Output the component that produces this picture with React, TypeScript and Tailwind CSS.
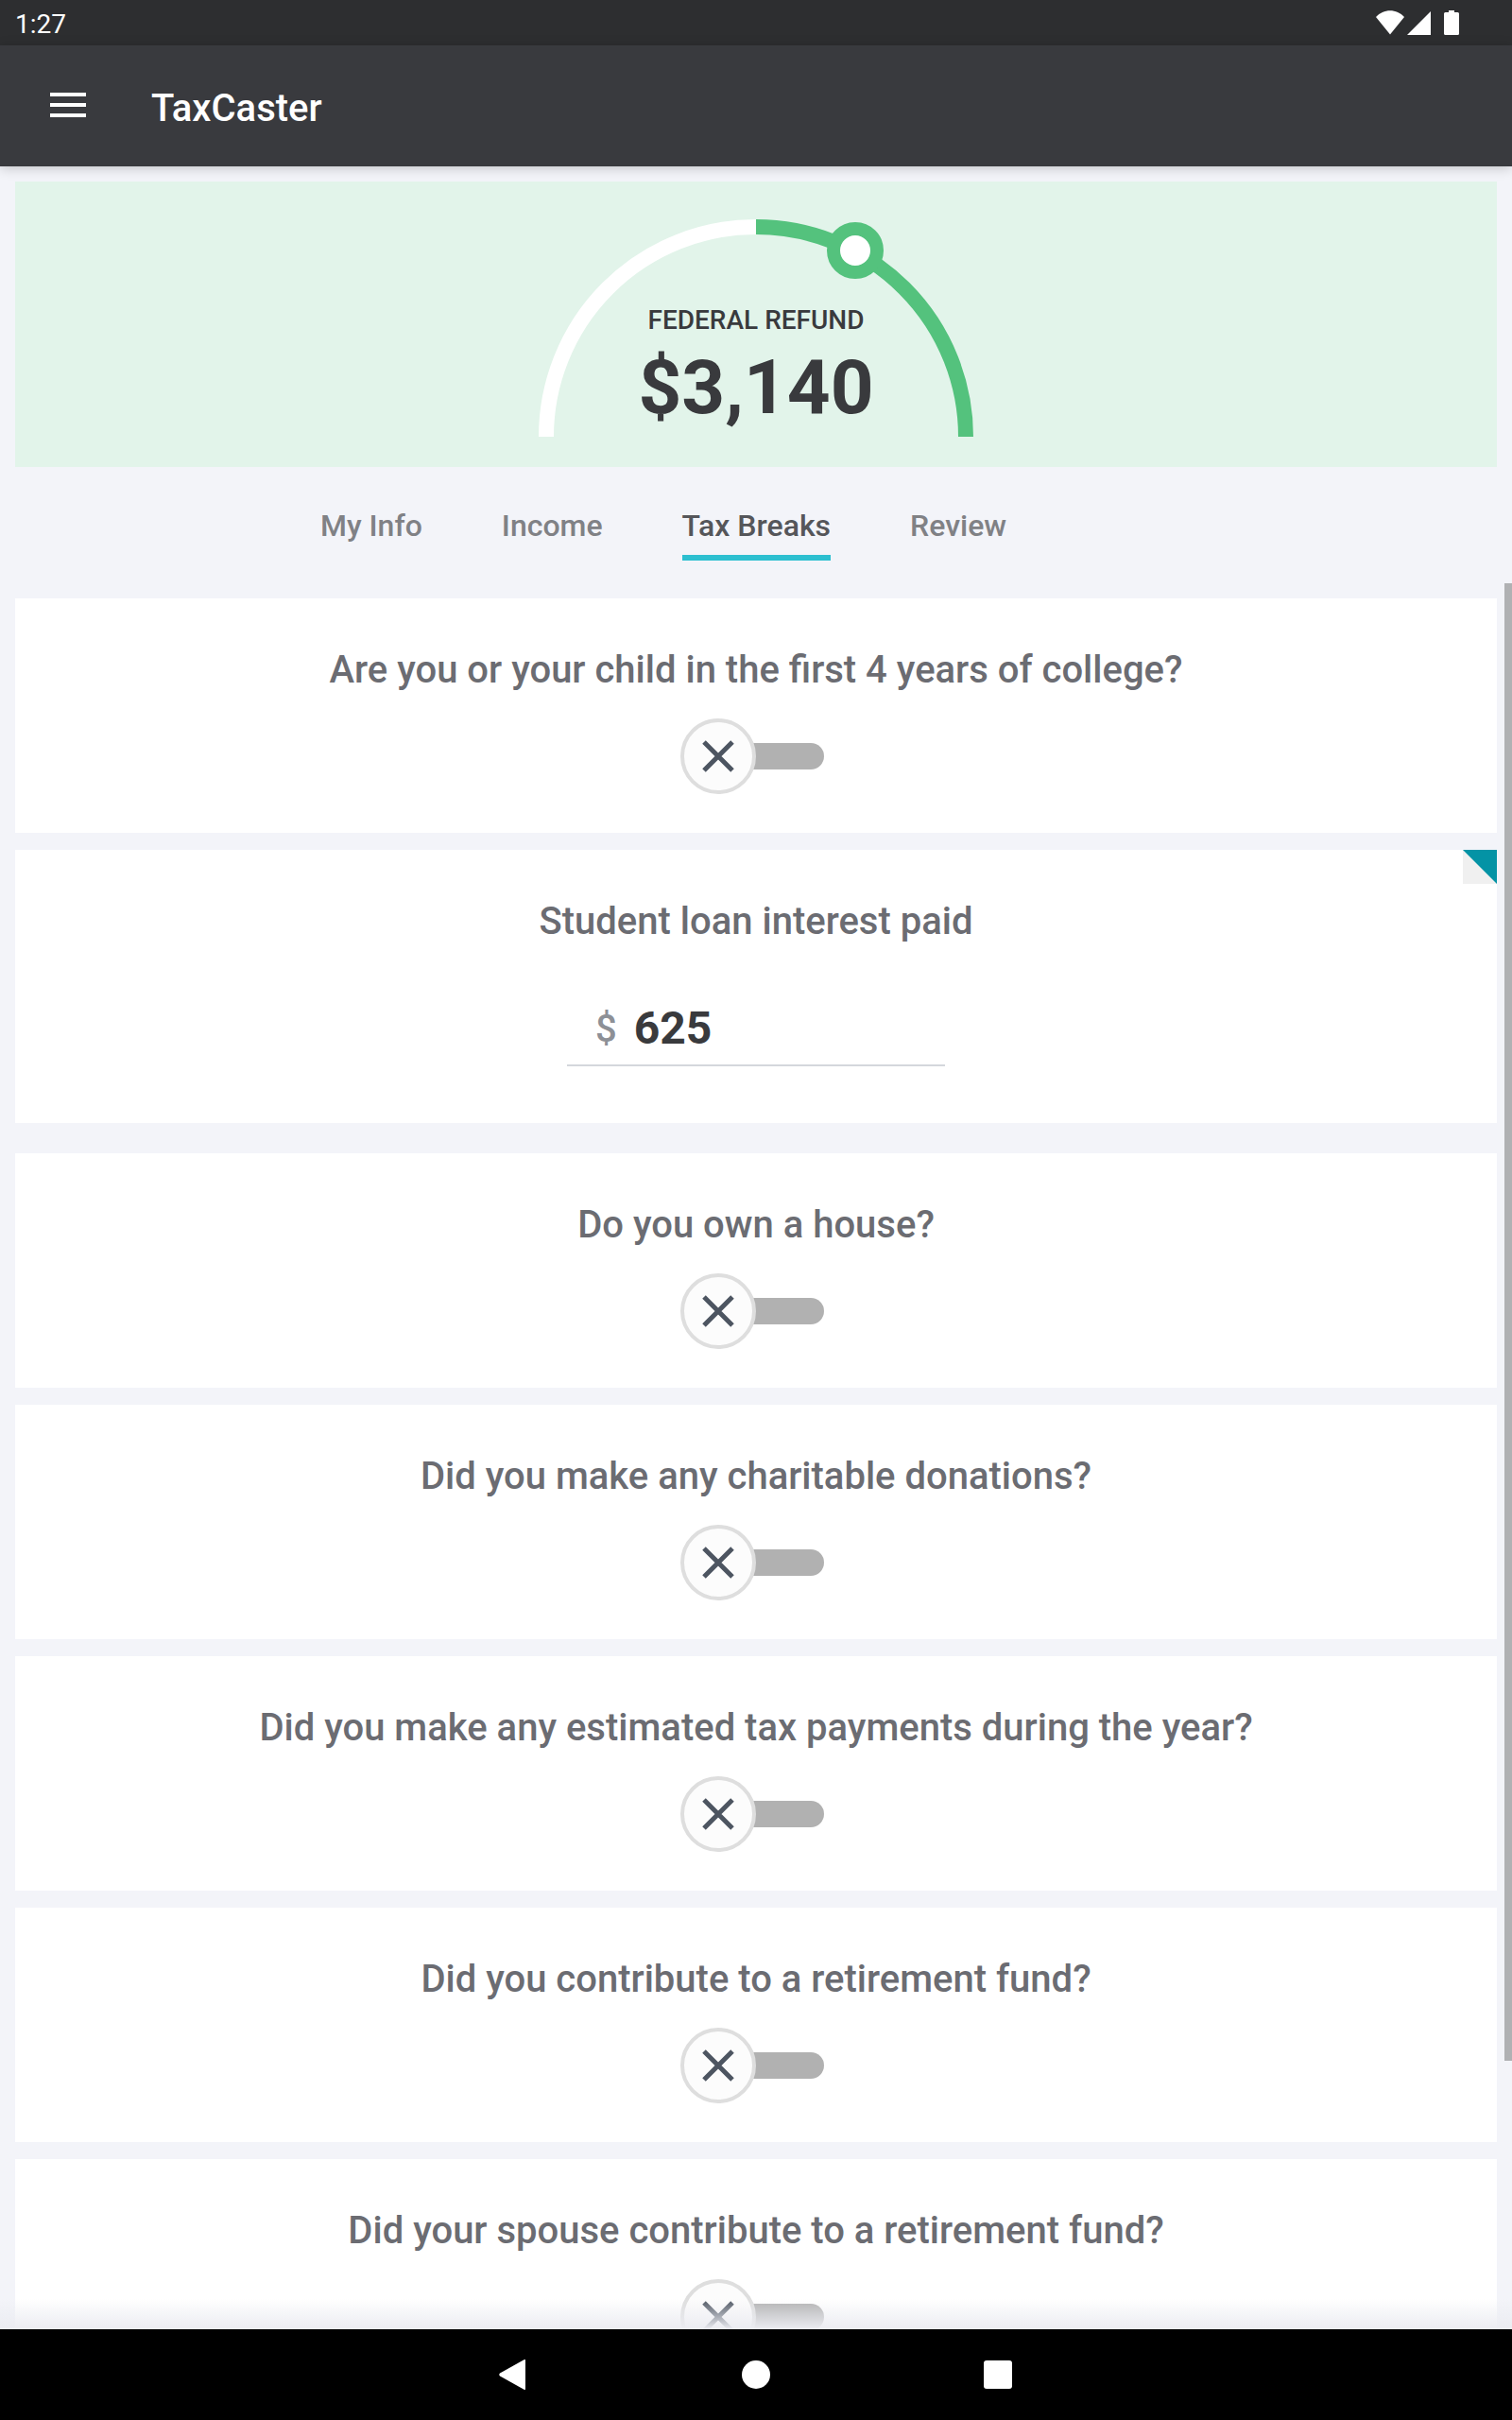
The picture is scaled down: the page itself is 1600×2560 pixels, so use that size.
import React, { useState } from 'react';
import clsx from 'clsx';

interface Question {
  id: string;
  text: string;
}

const tabs = ['My Info', 'Income', 'Tax Breaks', 'Review'];

const collegeQuestion: Question = {
  id: 'college',
  text: 'Are you or your child in the first 4 years of college?',
};

const questions: Question[] = [
  { id: 'house', text: 'Do you own a house?' },
  { id: 'donations', text: 'Did you make any charitable donations?' },
  { id: 'estimated', text: 'Did you make any estimated tax payments during the year?' },
  { id: 'retirement', text: 'Did you contribute to a retirement fund?' },
  { id: 'spouse-retirement', text: 'Did your spouse contribute to a retirement fund?' },
];

const StatusBar: React.FC = () => (
  <div className="flex h-12 shrink-0 items-center justify-between bg-[#2d2e30] pl-4 pr-14 text-white">
    <span className="pt-1 text-[28px] leading-8">1:27</span>
    <svg width="88" height="26" viewBox="0 0 88 26" fill="currentColor" aria-hidden="true">
      <path d="M0 7C8 -2 22 -2 30 7L15 25.500Z" />
      <path d="M58 1V26H33Z" />
      <path d="M77 0h6v2h3.500a1.500 1.500 0 0 1 1.500 1.500v21a1.500 1.500 0 0 1-1.500 1.500h-13a1.500 1.500 0 0 1-1.500-1.500v-21a1.500 1.500 0 0 1 1.500-1.500H77z" />
    </svg>
  </div>
);

const Header: React.FC = () => (
  <header className="relative z-10 flex h-32 shrink-0 items-center bg-[#393a3e] text-white shadow-[0_2px_12px_rgba(0,0,0,0.2)]">
    <button aria-label="Menu" className="flex h-32 w-36 items-center justify-center pb-[2px]">
      <svg width="38" height="26" viewBox="0 0 38 26" fill="currentColor" aria-hidden="true">
        <path d="M0 0h38v4H0zM0 11h38v4H0zM0 22h38v4H0z" />
      </svg>
    </button>
    <h1 className="pl-4 pt-[6px] text-[40px] font-medium leading-12">TaxCaster</h1>
  </header>
);

const RefundGauge: React.FC = () => (
  <section className="mx-4 mt-4 flex shrink-0 justify-center bg-[#e2f4ea] pb-8 pt-10">
    <div className="relative">
      <svg width="460" height="230" viewBox="0 0 460 230" fill="none" aria-hidden="true">
        <path d="M8 230A222 222 0 0 1 230 8" stroke="#fff" strokeWidth="16" />
        <path d="M230 8A222 222 0 0 1 452 230" stroke="#54c27d" strokeWidth="16" />
        <circle cx="335" cy="33" r="23" fill="#fff" stroke="#54c27d" strokeWidth="14" />
      </svg>
      <div className="absolute inset-x-0 bottom-3 text-center text-[#393a3d]">
        <p className="text-[28px] font-medium leading-8">FEDERAL REFUND</p>
        <p className="mt-[15px] text-[80px] font-bold leading-20">$3,140</p>
      </div>
    </div>
  </section>
);

const Toggle: React.FC<{ id: string }> = ({ id }) => (
  <label htmlFor={id} className="relative flex h-20 w-36 cursor-pointer items-center">
    <input id={id} type="checkbox" className="peer sr-only" />
    <span className="h-7 w-full rounded-full bg-[#b1b1b1] peer-checked:bg-[#54c27d]" />
    <span className="absolute -left-2 flex size-20 items-center justify-center rounded-full border-4 border-[#dedede] bg-[#fcfcfc] transition-transform peer-checked:translate-x-20">
      <svg width="34" height="34" viewBox="0 0 34 34" stroke="#4d5561" strokeWidth="5" aria-hidden="true">
        <path d="M2 2l30 30M32 2L2 32" />
      </svg>
    </span>
  </label>
);

const ToggleCard: React.FC<{ question: Question }> = ({ question }) => (
  <div className="flex flex-col items-center bg-white pb-[41px] pt-[52px]">
    <label htmlFor={question.id} className="mb-[27px] text-center text-[40px] font-medium leading-12">
      {question.text}
    </label>
    <Toggle id={question.id} />
  </div>
);

const App: React.FC = () => {
  const [activeTab, setActiveTab] = useState('Tax Breaks');
  const [interest, setInterest] = useState('625');

  return (
    <div className="flex h-screen flex-col overflow-hidden bg-[#f3f4f9] font-[Roboto,sans-serif]">
      <StatusBar />
      <Header />
      <RefundGauge />

      <nav className="flex shrink-0 justify-center gap-21 pb-6 pr-[196px] pt-[42px]">
        {tabs.map((tab) => (
          <button
            key={tab}
            onClick={() => setActiveTab(tab)}
            className={clsx(
              'border-b-6 pb-[11px] text-[32px] font-medium leading-10',
              tab === activeTab
                ? 'border-[#2cbfd0] text-[#55565a]'
                : 'border-transparent text-[#808185]'
            )}
          >
            {tab}
          </button>
        ))}
      </nav>

      <div className="relative min-h-0 flex-1">
        <main className="h-full overflow-y-auto px-4 pt-4 text-[#6b6c72] [scrollbar-width:none]">
          <ToggleCard question={collegeQuestion} />

          <div className="relative mb-8 mt-[18px] flex flex-col items-center bg-white pb-15 pt-[52px]">
            <svg className="absolute right-0 top-0" width="36" height="36" viewBox="0 0 36 36" aria-hidden="true">
              <path d="M0 0h36v36H0z" fill="#f0f0f0" />
              <path d="M0 0h36v36z" fill="#0493a5" />
            </svg>
            <label htmlFor="loan-interest" className="text-[40px] font-medium leading-12">
              Student loan interest paid
            </label>
            <div className="mt-[61px] flex w-[400px] items-center border-b-2 border-[#d4d7dc] pb-[10px] pl-[30px]">
              <span className="mr-[18px] pt-[2px] text-[40px] font-medium leading-[54px] text-[#8d9096]">$</span>
              <input
                id="loan-interest"
                type="text"
                inputMode="numeric"
                value={interest}
                onChange={(e) => setInterest(e.target.value)}
                className="h-14 min-w-0 flex-1 bg-transparent text-[48px] font-bold leading-14 text-[#393a3d] outline-none"
              />
            </div>
          </div>

          <div className="flex flex-col gap-[18px]">
            {questions.map((question) => (
              <ToggleCard key={question.id} question={question} />
            ))}
          </div>
        </main>

        {/* scroll thumb */}
        <div className="absolute right-0 top-0 h-11/13 w-2 bg-[#b0b1b3]" />
        <div className="pointer-events-none absolute inset-x-0 bottom-0 h-8 bg-linear-to-b from-[#ebecf1]/0 to-[#ebecf1]" />
      </div>

      <footer className="flex h-24 shrink-0 items-center justify-center gap-24 bg-black text-white">
        <button aria-label="Back" className="flex h-24 w-40 items-center justify-center">
          <svg width="32" height="32" viewBox="0 0 32 32" fill="currentColor" aria-hidden="true">
            <path d="M26.500 0.200Q28 -0.500 28 1V31Q28 32.500 26.500 31.800L1 17.500Q-0.500 16 1 14.500Z" />
          </svg>
        </button>
        <button aria-label="Home" className="flex h-24 w-40 items-center justify-center">
          <span className="size-[30px] rounded-full bg-white" />
        </button>
        <button aria-label="Recent apps" className="flex h-24 w-40 items-center justify-center">
          <span className="size-[30px] rounded-[3px] bg-white" />
        </button>
      </footer>
    </div>
  );
};

export default App;
